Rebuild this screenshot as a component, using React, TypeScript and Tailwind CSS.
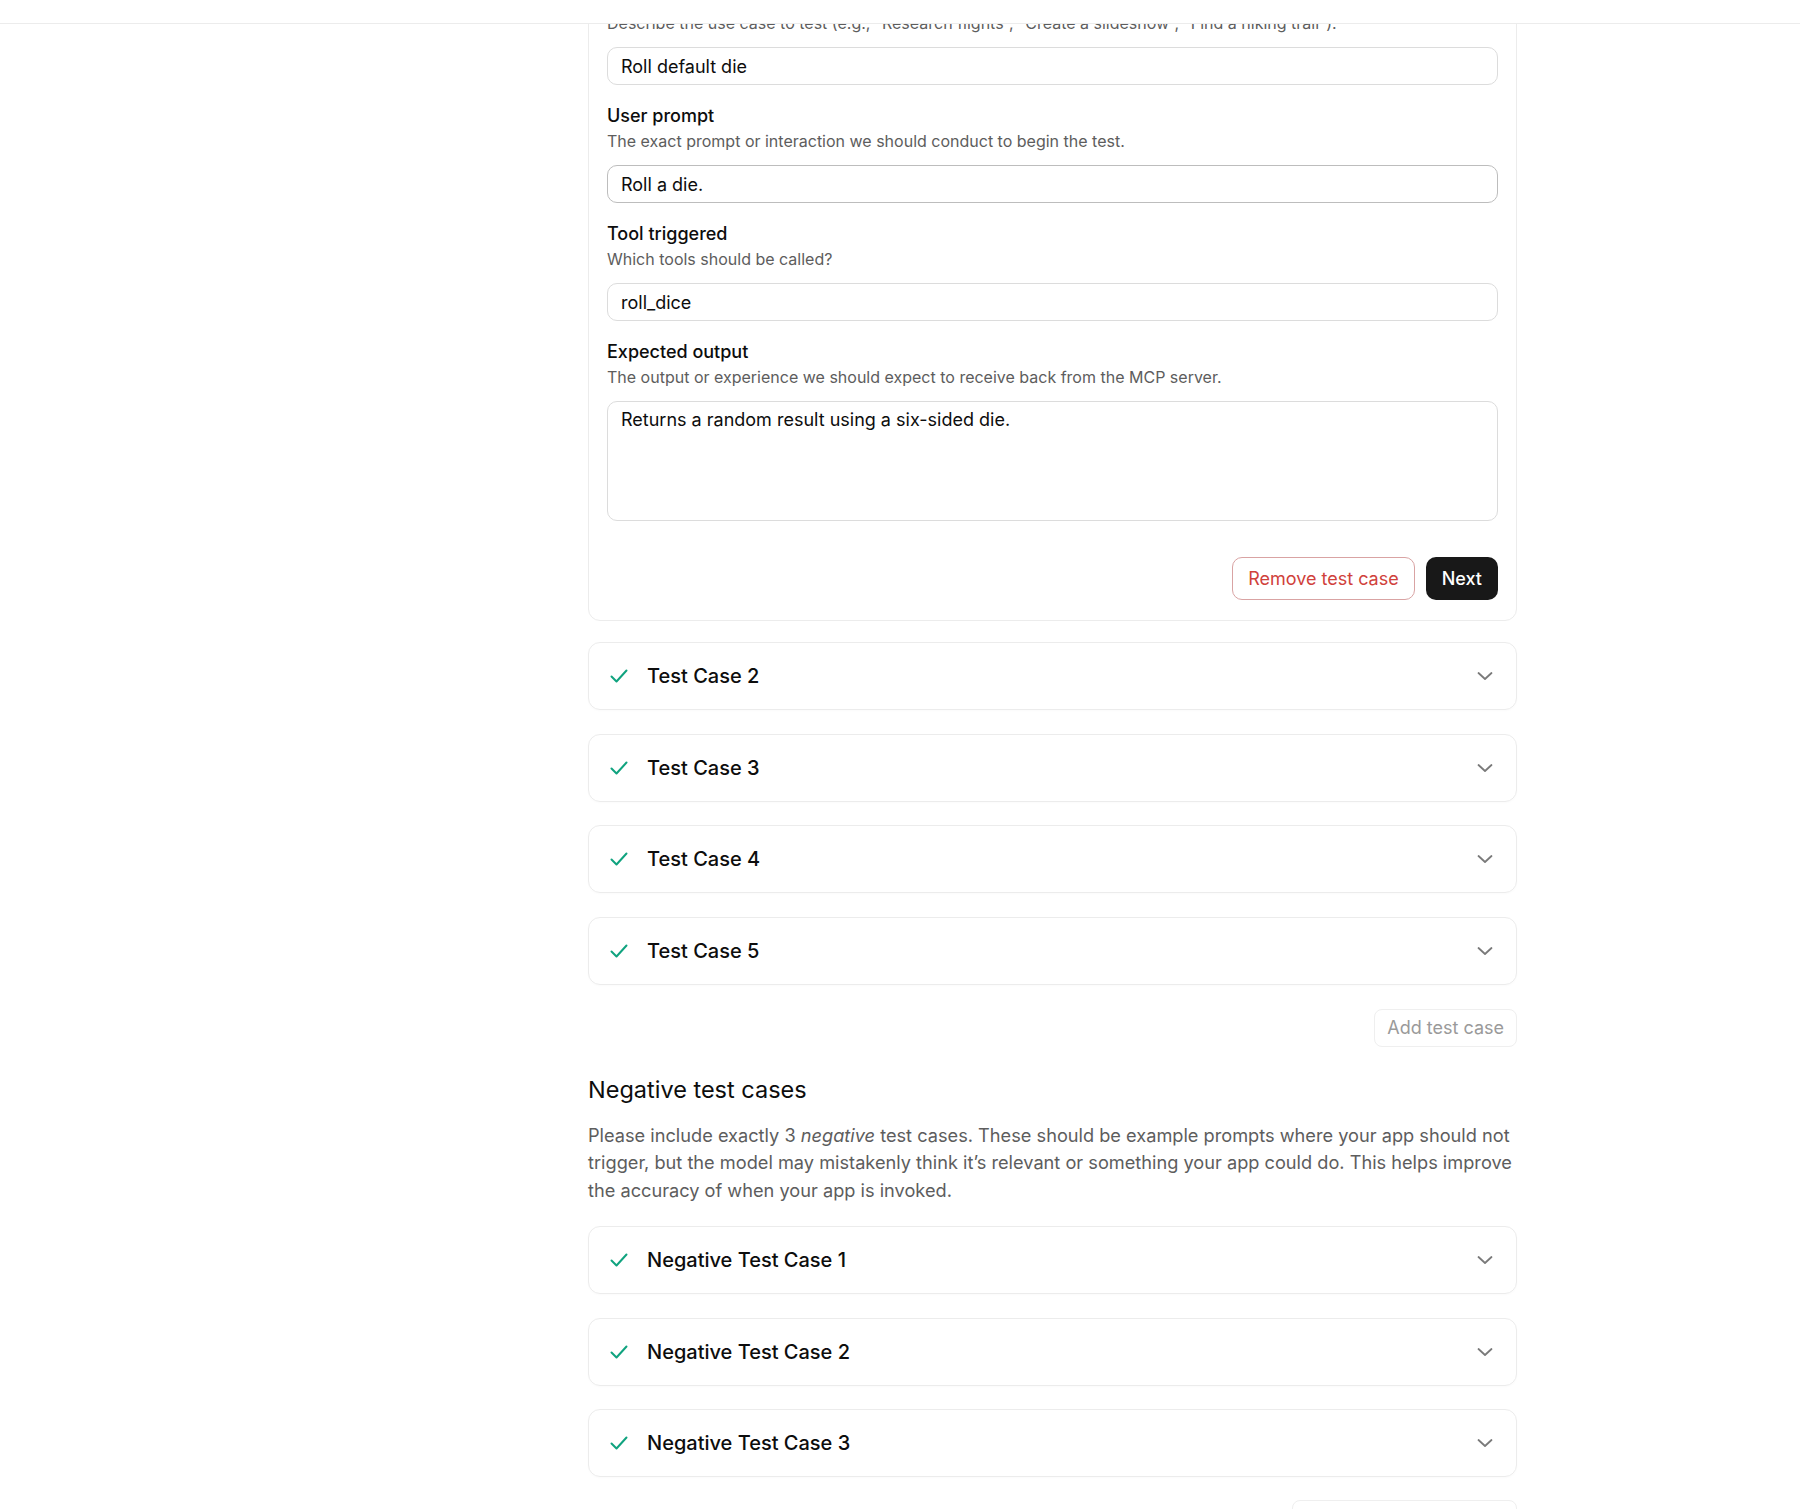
import React from "react";

const font = { fontFamily: "Inter, 'Noto Sans', 'Liberation Sans', sans-serif" };

function Check() {
  return (
    <svg width="20" height="20" viewBox="0 0 20 20" fill="none" className="shrink-0">
      <path d="M2.5 10.5 L7.5 15.5 L17.5 4.5" stroke="#10a37f" strokeWidth="2" strokeLinecap="round" strokeLinejoin="round" />
    </svg>
  );
}

function Chevron() {
  return (
    <svg width="18" height="18" viewBox="0 0 18 18" fill="none" className="shrink-0">
      <path d="M2.5 6 L9 12 L15.5 6" stroke="#7a7a7a" strokeWidth="1.8" strokeLinecap="round" strokeLinejoin="round" />
    </svg>
  );
}

function Field({
  label,
  desc,
  value,
  dark,
  area,
}: {
  label: string;
  desc: string;
  value: string;
  dark?: boolean;
  area?: boolean;
}) {
  return (
    <div className="flex flex-col">
      <div className="text-[18px] leading-[24px] font-medium text-[#0d0d0d]">{label}</div>
      <div className="mt-[3px] text-[16px] leading-[20px] text-[#5d5d5d]">{desc}</div>
      {area ? (
        <div className="mt-[14px] h-[120px] rounded-[10px] border border-[#dcdcdc] px-[13px] pt-[6px] text-[18px] leading-[24px] text-[#0d0d0d]">
          {value}
        </div>
      ) : (
        <div
          className={
            "mt-[14px] flex h-[38px] items-center rounded-[10px] border px-[13px] text-[18px] text-[#0d0d0d] " +
            (dark ? "border-[#bdbdbd]" : "border-[#dcdcdc]")
          }
        >
          {value}
        </div>
      )}
    </div>
  );
}

function Collapsed({ title }: { title: string }) {
  return (
    <div className="flex h-[68px] items-center rounded-[12px] border border-[#ececec] pl-[20px] pr-[22px] shadow-[0_1px_2px_rgba(0,0,0,0.02)]">
      <Check />
      <div className="ml-[18px] flex-1 text-[20px] font-medium text-[#0d0d0d]">{title}</div>
      <Chevron />
    </div>
  );
}

export default function App() {
  return (
    <div className="relative min-h-[1509px] overflow-hidden bg-white" style={font}>
      <div className="fixed left-0 right-0 top-0 z-10 h-[24px] border-b border-[#ececec] bg-white" />
      <div className="pl-[305px]">
        <div className="mx-auto w-[929px]">
          <div className="-mt-[33px] rounded-[12px] border border-[#ececec] px-[18px] pb-[20px] pt-[18px]">
            <div className="flex flex-col gap-[19px]">
              <Field
                label="Use case"
                desc={"Describe the use case to test (e.g., \u201cResearch flights\u201d, \u201cCreate a slideshow\u201d, \u201cFind a hiking trail\u201d)."}
                value="Roll default die"
              />
              <Field
                label="User prompt"
                desc="The exact prompt or interaction we should conduct to begin the test."
                value="Roll a die."
                dark
              />
              <Field label="Tool triggered" desc="Which tools should be called?" value="roll_dice" />
              <Field
                label="Expected output"
                desc="The output or experience we should expect to receive back from the MCP server."
                value="Returns a random result using a six-sided die."
                area
              />
            </div>
            <div className="mt-[36px] flex justify-end gap-[11px]">
              <button className="h-[43px] rounded-[10px] border border-[#d9a3a3] px-[15px] text-[18px] text-[#d0413b]">
                Remove test case
              </button>
              <button className="h-[43px] rounded-[10px] bg-[#181818] px-[16px] text-[18px] font-medium text-white">
                Next
              </button>
            </div>
          </div>

          <div className="mt-[21px] flex flex-col gap-[23.5px]">
            <Collapsed title="Test Case 2" />
            <Collapsed title="Test Case 3" />
            <Collapsed title="Test Case 4" />
            <Collapsed title="Test Case 5" />
          </div>

          <div className="mt-[24px] flex justify-end">
            <button className="h-[38px] rounded-[8px] border border-[#efefef] px-[12px] text-[18px] text-[#9a9a9a]">
              Add test case
            </button>
          </div>

          <h2 className="mt-[28px] text-[23.5px] leading-[30px] text-[#0d0d0d]">Negative test cases</h2>
          <p className="mt-[17px] text-[18.2px] leading-[27.5px] text-[#5d5d5d]">
            Please include exactly 3 <em>negative</em> test cases. These should be example prompts where your app should not
            trigger, but the model may mistakenly think it’s relevant or something your app could do. This helps improve
            the accuracy of when your app is invoked.
          </p>

          <div className="mt-[22px] flex flex-col gap-[23.5px]">
            <Collapsed title="Negative Test Case 1" />
            <Collapsed title="Negative Test Case 2" />
            <Collapsed title="Negative Test Case 3" />
          </div>

          <div className="mt-[23px] flex justify-end">
            <button className="h-[38px] rounded-[8px] border border-[#efefef] px-[14px] text-[18px] text-[#9a9a9a]">
              Add negative test case
            </button>
          </div>
        </div>
      </div>
    </div>
  );
}
